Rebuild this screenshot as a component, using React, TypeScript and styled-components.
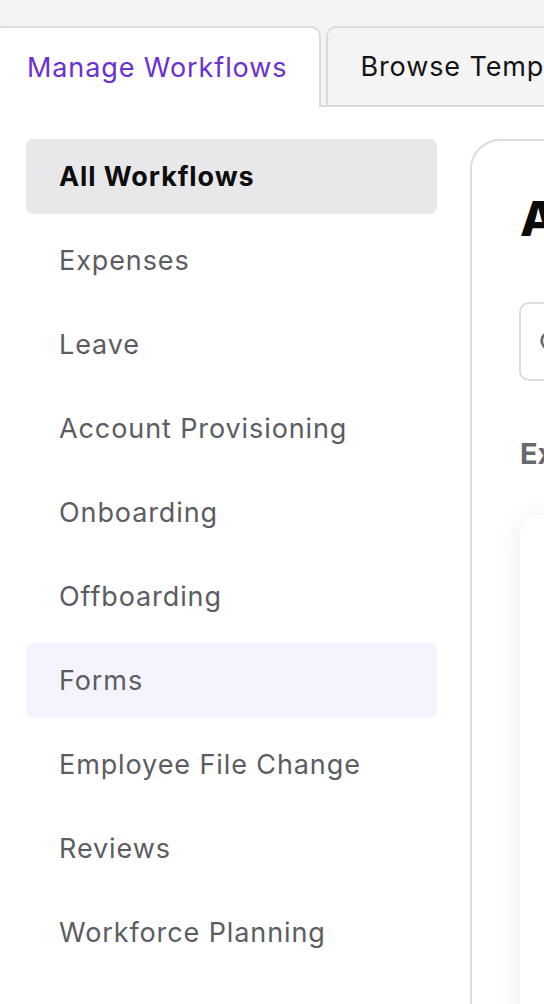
import React from "react";
import styled, { createGlobalStyle, css } from "styled-components";

const GlobalStyle = createGlobalStyle`
  html, body {
    margin: 0;
    padding: 0;
    background: #ffffff;
    font-family: Inter, "Noto Sans", sans-serif;
    overflow: hidden;
  }
  * { box-sizing: border-box; }
`;

const Page = styled.div`
  width: 544px;
  height: 1004px;
  overflow: hidden;
  display: flex;
  flex-direction: column;
`;

const TabBar = styled.div`
  display: flex;
  gap: 5px;
  padding-top: 26px;
  margin-left: -7px;
  background: #f4f4f5;
  border-bottom: 2px solid #dcdce0;
  flex-shrink: 0;
`;

const Tab = styled.div<{ $active?: boolean }>(
  ({ $active }) => css`
    flex-shrink: 0;
    padding: 0 32px;
    display: flex;
    align-items: center;
    border: 2px solid #dcdce0;
    border-bottom: none;
    border-radius: 10px 10px 0 0;
    font-size: 27px;
    letter-spacing: 0.9px;
    white-space: nowrap;
    background: ${$active ? "#ffffff" : "#f4f4f5"};
    color: ${$active ? "#6b2fd3" : "#141414"};
    margin-bottom: ${$active ? "-2px" : "0"};
    height: ${$active ? "81px" : "79px"};
  `
);

const Body = styled.div`
  display: flex;
  gap: 33px;
  padding-top: 32px;
  flex: 1;
`;

const Sidebar = styled.nav`
  width: 411px;
  margin-left: 26px;
  display: flex;
  flex-direction: column;
  gap: 9px;
  flex-shrink: 0;
`;

const NavItem = styled.div<{ $state?: "active" | "hover" }>(
  ({ $state }) => css`
    height: 75px;
    display: flex;
    align-items: center;
    padding-left: 33px;
    border-radius: 7px;
    font-size: 27px;
    letter-spacing: 0.9px;
    color: ${$state === "active" ? "#0d0d0d" : "#5c5c63"};
    font-weight: ${$state === "active" ? 700 : 400};
    background: ${$state === "active"
      ? "#e8e8ea"
      : $state === "hover"
      ? "#f5f3fd"
      : "transparent"};
  `
);

const Panel = styled.section`
  flex-shrink: 0;
  width: 400px;
  border: 2px solid #dcdce0;
  border-right: none;
  border-bottom: none;
  border-radius: 30px 0 0 0;
  padding: 46px 0 0 48px;
  display: flex;
  flex-direction: column;
  min-height: 900px;
`;

const Heading = styled.h1`
  margin: 0;
  font-size: 48px;
  line-height: 64px;
  font-weight: 800;
  color: #0b0b0b;
  white-space: nowrap;
`;

const Search = styled.div`
  margin-top: 51px;
  margin-left: -1px;
  height: 79px;
  border: 2px solid #dcdce0;
  border-right: none;
  border-radius: 10px 0 0 10px;
  display: flex;
  align-items: center;
  padding-left: 16px;
  color: #6a6a70;
`;

const SectionTitle = styled.h2`
  margin: 56px 0 0;
  font-size: 29px;
  line-height: 34px;
  font-weight: 700;
  color: #68686e;
  white-space: nowrap;
`;

const Card = styled.div`
  margin-top: 44px;
  height: 520px;
  background: #ffffff;
  border-radius: 22px 0 0 0;
  box-shadow: 0 4px 28px rgba(0, 0, 0, 0.09);
`;

const navItems: { label: string; state?: "active" | "hover" }[] = [
  { label: "All Workflows", state: "active" },
  { label: "Expenses" },
  { label: "Leave" },
  { label: "Account Provisioning" },
  { label: "Onboarding" },
  { label: "Offboarding" },
  { label: "Forms", state: "hover" },
  { label: "Employee File Change" },
  { label: "Reviews" },
  { label: "Workforce Planning" },
];

export default function App() {
  return (
    <Page>
      <GlobalStyle />
      <TabBar>
        <Tab $active>Manage Workflows</Tab>
        <Tab>Browse Templates</Tab>
      </TabBar>
      <Body>
        <Sidebar>
          {navItems.map((item) => (
            <NavItem key={item.label} $state={item.state}>
              {item.label}
            </NavItem>
          ))}
        </Sidebar>
        <Panel>
          <Heading>All Workflows</Heading>
          <Search>
            <svg width="28" height="28" viewBox="0 0 24 24" fill="none" stroke="currentColor" strokeWidth="2.4" strokeLinecap="round">
              <circle cx="11" cy="11" r="7" />
              <path d="M20 20l-4-4" />
            </svg>
          </Search>
          <SectionTitle>Expenses</SectionTitle>
          <Card />
        </Panel>
      </Body>
    </Page>
  );
}
